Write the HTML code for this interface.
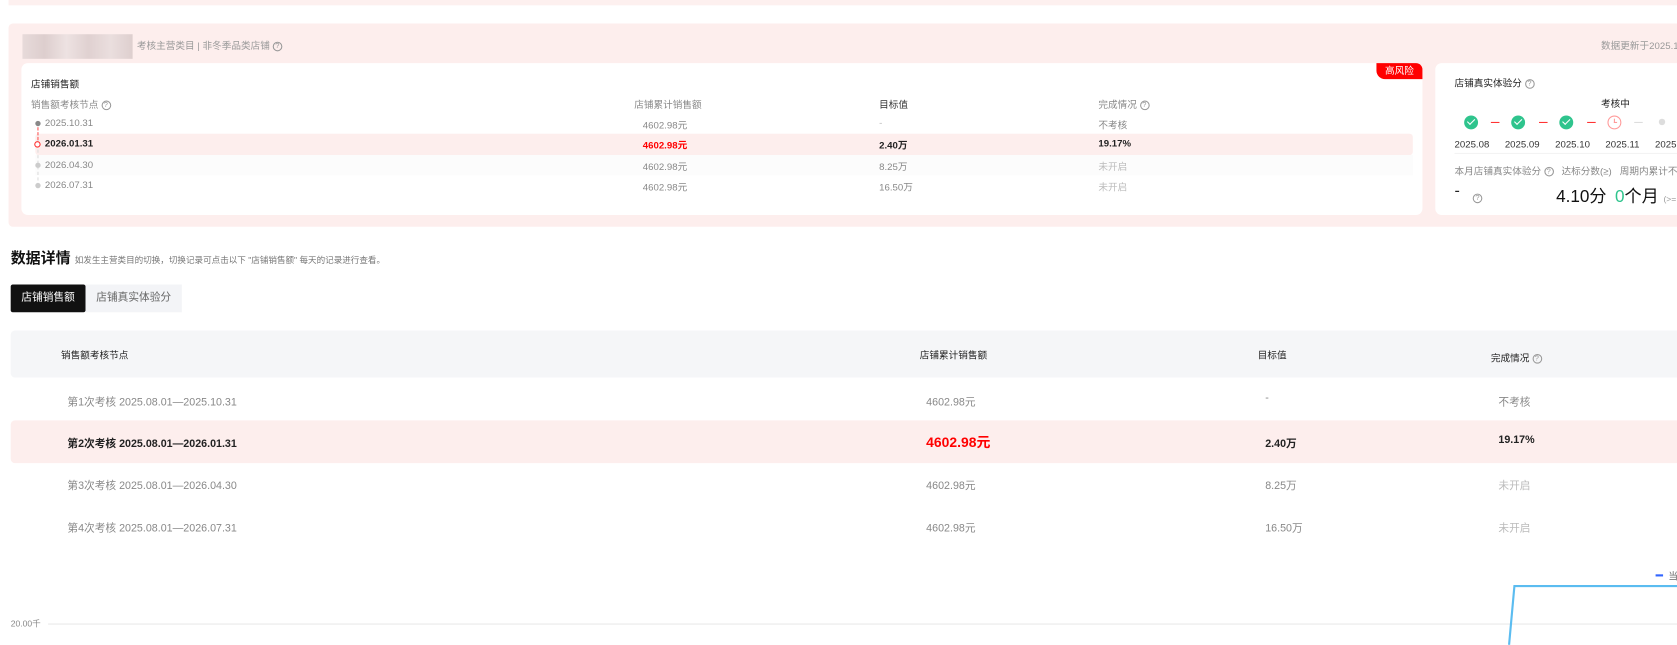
<!DOCTYPE html>
<html><head><meta charset="utf-8"><style>
*{margin:0;padding:0;box-sizing:border-box}
body{width:1677px;height:645px;overflow:hidden;background:#fff;font-family:"Liberation Sans","Noto Sans CJK SC",sans-serif;color:#333;position:relative}
#w{position:absolute;left:0;top:0;width:1568px;height:603px;transform:scale(1.0695);transform-origin:0 0}
.a{position:absolute;white-space:nowrap}
.g{color:#888}.lg{color:#bbb}
.q{display:inline-block;width:9px;height:9px;border:1px solid #999;border-radius:50%;font-size:7px;line-height:7px;text-align:center;color:#999;vertical-align:1px}
.ok{position:absolute;width:13px;height:13px;border-radius:50%;background:#2fc48d}
.ok:after{content:"";position:absolute;left:3px;top:3px;width:6px;height:3px;border-left:1.5px solid #fff;border-bottom:1.5px solid #fff;transform:rotate(-45deg)}
.dash{position:absolute;width:8px;height:1px;background:#f33}
</style></head><body><div id="w">
<div class="a" style="left:8px;top:0;width:1600px;height:5px;background:#fdf0ef"></div>
<div class="a" style="left:8px;top:22px;width:1600px;height:190px;background:#fdeeed;border-radius:4px"></div>
<div class="a" style="left:21px;top:32px;width:103px;height:23px;background:linear-gradient(90deg,#e0d4d4,#d2c3c3,#e8dede,#d6c7c7,#e4d9d9,#d3c4c4);opacity:.75"></div>
<div class="a g" style="left:128px;top:36px;font-size:9px;color:#999">考核主营类目 | 非冬季品类店铺 <span class="q">?</span></div>
<div class="a g" style="left:1497px;top:36px;font-size:9px;color:#999">数据更新于2025.11</div>
<div class="a" style="left:20px;top:59px;width:1310px;height:142px;background:#fff;border-radius:6px"></div>
<div class="a" style="left:1287px;top:59px;width:43px;height:15px;background:#f00;border-radius:0 6px 0 8px;color:#fff;font-size:9px;line-height:15px;text-align:center">高风险</div>
<div class="a" style="left:29px;top:72px;font-size:9px;color:#222">店铺销售额</div>
<div class="a g" style="left:29px;top:91px;font-size:9px">销售额考核节点 <span class="q">?</span></div>
<div class="a g" style="left:593px;top:91px;font-size:9px">店铺累计销售额</div>
<div class="a" style="left:822px;top:91px;font-size:9px">目标值</div>
<div class="a g" style="left:1027px;top:91px;font-size:9px">完成情况 <span class="q">?</span></div>
<div class="a" style="left:33px;top:125px;width:1288px;height:20px;background:#fdeeed;border-radius:3px"></div>
<div class="a" style="left:33px;top:145px;width:1288px;height:19px;background:#fcfcfc"></div>
<div class="a" style="left:35px;top:119px;height:55px;border-left:1px dashed #ddd"></div>
<div class="a" style="left:35px;top:119px;height:12px;border-left:1px dashed #f55"></div>
<div class="a" style="left:33px;top:113px;width:5px;height:5px;border-radius:50%;background:#888"></div>
<div class="a" style="left:32px;top:132px;width:6px;height:6px;border-radius:50%;border:1.5px solid #f33;background:#fff"></div>
<div class="a" style="left:33px;top:152px;width:5px;height:5px;border-radius:50%;background:#ccc"></div>
<div class="a" style="left:33px;top:171px;width:5px;height:5px;border-radius:50%;background:#ccc"></div>
<div class="a g" style="left:42px;top:110px;font-size:9px">2025.10.31</div>
<div class="a" style="left:42px;top:129px;font-size:9px;font-weight:bold;color:#222">2026.01.31</div>
<div class="a g" style="left:42px;top:149px;font-size:9px">2026.04.30</div>
<div class="a g" style="left:42px;top:168px;font-size:9px">2026.07.31</div>
<div class="a g" style="left:601px;top:110px;font-size:9px">4602.98元</div>
<div class="a" style="left:601px;top:129px;font-size:9px;font-weight:bold;color:#f00">4602.98元</div>
<div class="a g" style="left:601px;top:149px;font-size:9px">4602.98元</div>
<div class="a g" style="left:601px;top:168px;font-size:9px">4602.98元</div>
<div class="a lg" style="left:822px;top:110px;font-size:9px">-</div>
<div class="a" style="left:822px;top:129px;font-size:9px;font-weight:bold;color:#222">2.40万</div>
<div class="a g" style="left:822px;top:149px;font-size:9px">8.25万</div>
<div class="a g" style="left:822px;top:168px;font-size:9px">16.50万</div>
<div class="a g" style="left:1027px;top:110px;font-size:9px">不考核</div>
<div class="a" style="left:1027px;top:129px;font-size:9px;font-weight:bold;color:#222">19.17%</div>
<div class="a lg" style="left:1027px;top:149px;font-size:9px">未开启</div>
<div class="a lg" style="left:1027px;top:168px;font-size:9px">未开启</div>
<div class="a" style="left:1342px;top:59px;width:340px;height:142px;background:#fff;border-radius:6px"></div>
<div class="a" style="left:1360px;top:71px;font-size:9px;color:#222">店铺真实体验分 <span class="q">?</span></div>
<div class="a" style="left:1497px;top:90px;font-size:9px;color:#222">考核中</div>
<div class="ok" style="left:1369px;top:108px"></div>
<div class="dash" style="left:1394px;top:114px"></div>
<div class="ok" style="left:1413px;top:108px"></div>
<div class="dash" style="left:1439px;top:114px"></div>
<div class="ok" style="left:1458px;top:108px"></div>
<div class="dash" style="left:1484px;top:114px"></div>
<div class="a" style="left:1503px;top:108px;width:13px;height:13px;border-radius:50%;border:1px solid #f99"><div style="position:absolute;left:5px;top:2px;width:3px;height:4px;border-left:1px solid #f99;border-bottom:1px solid #f99"></div></div>
<div class="a" style="left:1528px;top:114px;width:8px;height:1px;background:#ddd"></div>
<div class="a" style="left:1551px;top:111px;width:6px;height:6px;border-radius:50%;background:#ddd"></div>
<div class="a" style="left:1360px;top:130px;font-size:9px;color:#333;word-spacing:12px">2025.08 2025.09 2025.10 2025.11 2025.12</div>
<div class="a" style="left:1360px;top:143px;width:320px;height:1px;background:#f3f3f3"></div>
<div class="a g" style="left:1360px;top:153px;font-size:9px">本月店铺真实体验分 <span class="q">?</span>&nbsp;&nbsp; 达标分数(≥)&nbsp;&nbsp; 周期内累计不达</div>
<div class="a" style="left:1360px;top:170px;font-size:15px;color:#222">-</div>
<div class="a" style="left:1377px;top:175px"><span class="q">?</span></div>
<div class="a" style="left:1455px;top:170px;font-size:16px;color:#111">4.10分</div>
<div class="a" style="left:1510px;top:170px;font-size:16px;color:#111"><span style="color:#2fc48d">0</span>个月 <span style="font-size:8px;color:#999">(&gt;=</span></div>
<div class="a" style="left:10px;top:231px;font-size:14px;font-weight:bold;color:#111">数据详情 <span style="font-size:8px;font-weight:normal;color:#777">如发生主营类目的切换，切换记录可点击以下 "店铺销售额" 每天的记录进行查看。</span></div>
<div class="a" style="left:10px;top:266px;width:70px;height:26px;background:#111;border-radius:2px;color:#fff;font-size:10px;line-height:26px;text-align:center">店铺销售额</div>
<div class="a" style="left:80px;top:266px;width:90px;height:26px;background:#f3f4f7;color:#666;font-size:10px;line-height:26px;text-align:center">店铺真实体验分</div>
<div class="a" style="left:10px;top:309px;width:1600px;height:44px;background:#f5f6f8;border-radius:4px"></div>
<div class="a" style="left:57px;top:325px;font-size:9px;color:#222">销售额考核节点</div>
<div class="a" style="left:860px;top:325px;font-size:9px;color:#222">店铺累计销售额</div>
<div class="a" style="left:1176px;top:325px;font-size:9px;color:#222">目标值</div>
<div class="a" style="left:1394px;top:328px;font-size:9px;color:#222">完成情况 <span class="q">?</span></div>
<div class="a" style="left:10px;top:393px;width:1600px;height:40px;background:#fdeeed;border-radius:4px"></div>
<div class="a g" style="left:63px;top:367px;font-size:10px">第1次考核 2025.08.01—2025.10.31</div>
<div class="a" style="left:63px;top:406px;font-size:10px;font-weight:bold;color:#222">第2次考核 2025.08.01—2026.01.31</div>
<div class="a g" style="left:63px;top:445px;font-size:10px">第3次考核 2025.08.01—2026.04.30</div>
<div class="a g" style="left:63px;top:485px;font-size:10px">第4次考核 2025.08.01—2026.07.31</div>
<div class="a g" style="left:866px;top:367px;font-size:10px">4602.98元</div>
<div class="a" style="left:866px;top:403px;font-size:13px;font-weight:bold;color:#f00">4602.98元</div>
<div class="a g" style="left:866px;top:445px;font-size:10px">4602.98元</div>
<div class="a g" style="left:866px;top:485px;font-size:10px">4602.98元</div>
<div class="a g" style="left:1183px;top:367px;font-size:10px">-</div>
<div class="a" style="left:1183px;top:406px;font-size:10px;font-weight:bold;color:#222">2.40万</div>
<div class="a g" style="left:1183px;top:445px;font-size:10px">8.25万</div>
<div class="a g" style="left:1183px;top:485px;font-size:10px">16.50万</div>
<div class="a g" style="left:1401px;top:367px;font-size:10px">不考核</div>
<div class="a" style="left:1401px;top:406px;font-size:10px;font-weight:bold;color:#222">19.17%</div>
<div class="a lg" style="left:1401px;top:445px;font-size:10px">未开启</div>
<div class="a lg" style="left:1401px;top:485px;font-size:10px">未开启</div>
<div class="a" style="left:1548px;top:537px;width:7px;height:2px;background:#36f"></div>
<div class="a" style="left:1560px;top:532px;font-size:9px;color:#666">当</div>
<div class="a g" style="left:10px;top:578px;font-size:8px">20.00千</div>
<div class="a" style="left:45px;top:583px;width:1600px;height:1px;background:#e8e8e8"></div>
<svg class="a" style="left:0;top:0" width="1600" height="603"><polyline points="1411,603 1416,548 1600,548" fill="none" stroke="#5bbcf0" stroke-width="2"/></svg>
</div></body></html>
